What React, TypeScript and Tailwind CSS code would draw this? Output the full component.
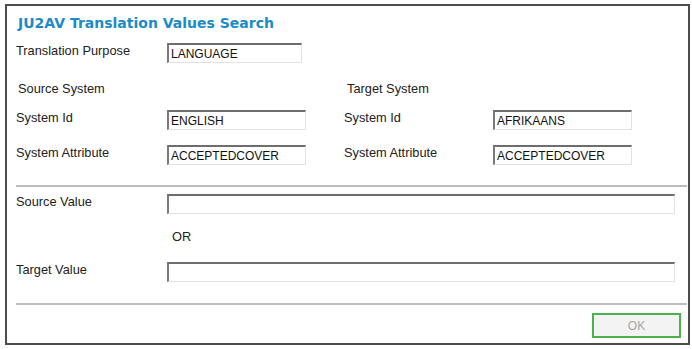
import React from 'react';

const titleFont = { fontFamily: 'Tahoma, "DejaVu Sans", sans-serif' };

const Field: React.FC<{ value?: string; className?: string }> = ({ value = '', className = '' }) => (
  <div
    className={`h-[20px] bg-white border-t-2 border-l-2 border-r border-b border-t-[#6d6d6d] border-l-[#7a7a7a] border-r-[#e2e2e2] border-b-[#e2e2e2] flex items-center pl-[2px] text-[12px] text-[#111] ${className}`}
  >
    {value}
  </div>
);

const Label: React.FC<{ children: React.ReactNode; className?: string }> = ({ children, className = '' }) => (
  <div className={`text-[12.8px] text-[#222] leading-[14px] pt-[1px] ${className}`}>{children}</div>
);

export default function App() {
  return (
    <div className="w-[692px] h-[349px] bg-white pt-[4px] pl-[5px]" style={{ fontFamily: '"Liberation Sans", Arial, sans-serif' }}>
      <div className="w-[685px] h-[341px] border-2 border-[#4d4d4d] flex flex-col">
        <div className="h-[20px] mt-[7px] pl-[11px] flex items-center text-[14px] font-bold text-[#1b8bc9]" style={titleFont}>
          JU2AV Translation Values Search
        </div>

        <div className="flex mt-[10px] h-[20px]">
          <Label className="w-[160px] pl-[9px]">Translation Purpose</Label>
          <Field value="LANGUAGE" className="w-[135px]" />
        </div>

        <div className="flex mt-[17px] h-[18px] items-center text-[12.8px] text-[#222]">
          <div className="w-[340px] pl-[11px]">Source System</div>
          <div>Target System</div>
        </div>

        <div className="flex mt-[12px] h-[20px]">
          <div className="flex w-[337px]">
            <Label className="w-[160px] pl-[9px]">System Id</Label>
            <Field value="ENGLISH" className="w-[139px]" />
          </div>
          <Label className="w-[149px]">System Id</Label>
          <Field value="AFRIKAANS" className="w-[139px]" />
        </div>

        <div className="flex mt-[15px] h-[20px]">
          <div className="flex w-[337px]">
            <Label className="w-[160px] pl-[9px]">System Attribute</Label>
            <Field value="ACCEPTEDCOVER" className="w-[139px]" />
          </div>
          <Label className="w-[149px]">System Attribute</Label>
          <Field value="ACCEPTEDCOVER" className="w-[139px]" />
        </div>

        <div className="mt-[20px] ml-[9px] mr-[1px] h-[2px] bg-[#bdbdbd]" />

        <div className="flex mt-[7px] h-[20px]">
          <Label className="w-[160px] pl-[9px]">Source Value</Label>
          <Field className="w-[508px]" />
        </div>

        <div className="mt-[16px] h-[14px] pl-[165px] text-[12.8px] text-[#222] leading-[14px]">OR</div>

        <div className="flex mt-[18px] h-[20px]">
          <Label className="w-[160px] pl-[9px]">Target Value</Label>
          <Field className="w-[508px]" />
        </div>

        <div className="mt-[21px] ml-[9px] mr-[1px] h-[2px] bg-[#bdbdbd]" />

        <div className="flex justify-end mt-[8px] pr-[7px]">
          <div className="w-[89px] h-[25px] border-2 border-[#4cb34c] bg-[#f3f3f3] flex items-center justify-center text-[12px] text-[#a5a5a5]">
            OK
          </div>
        </div>
      </div>
    </div>
  );
}
